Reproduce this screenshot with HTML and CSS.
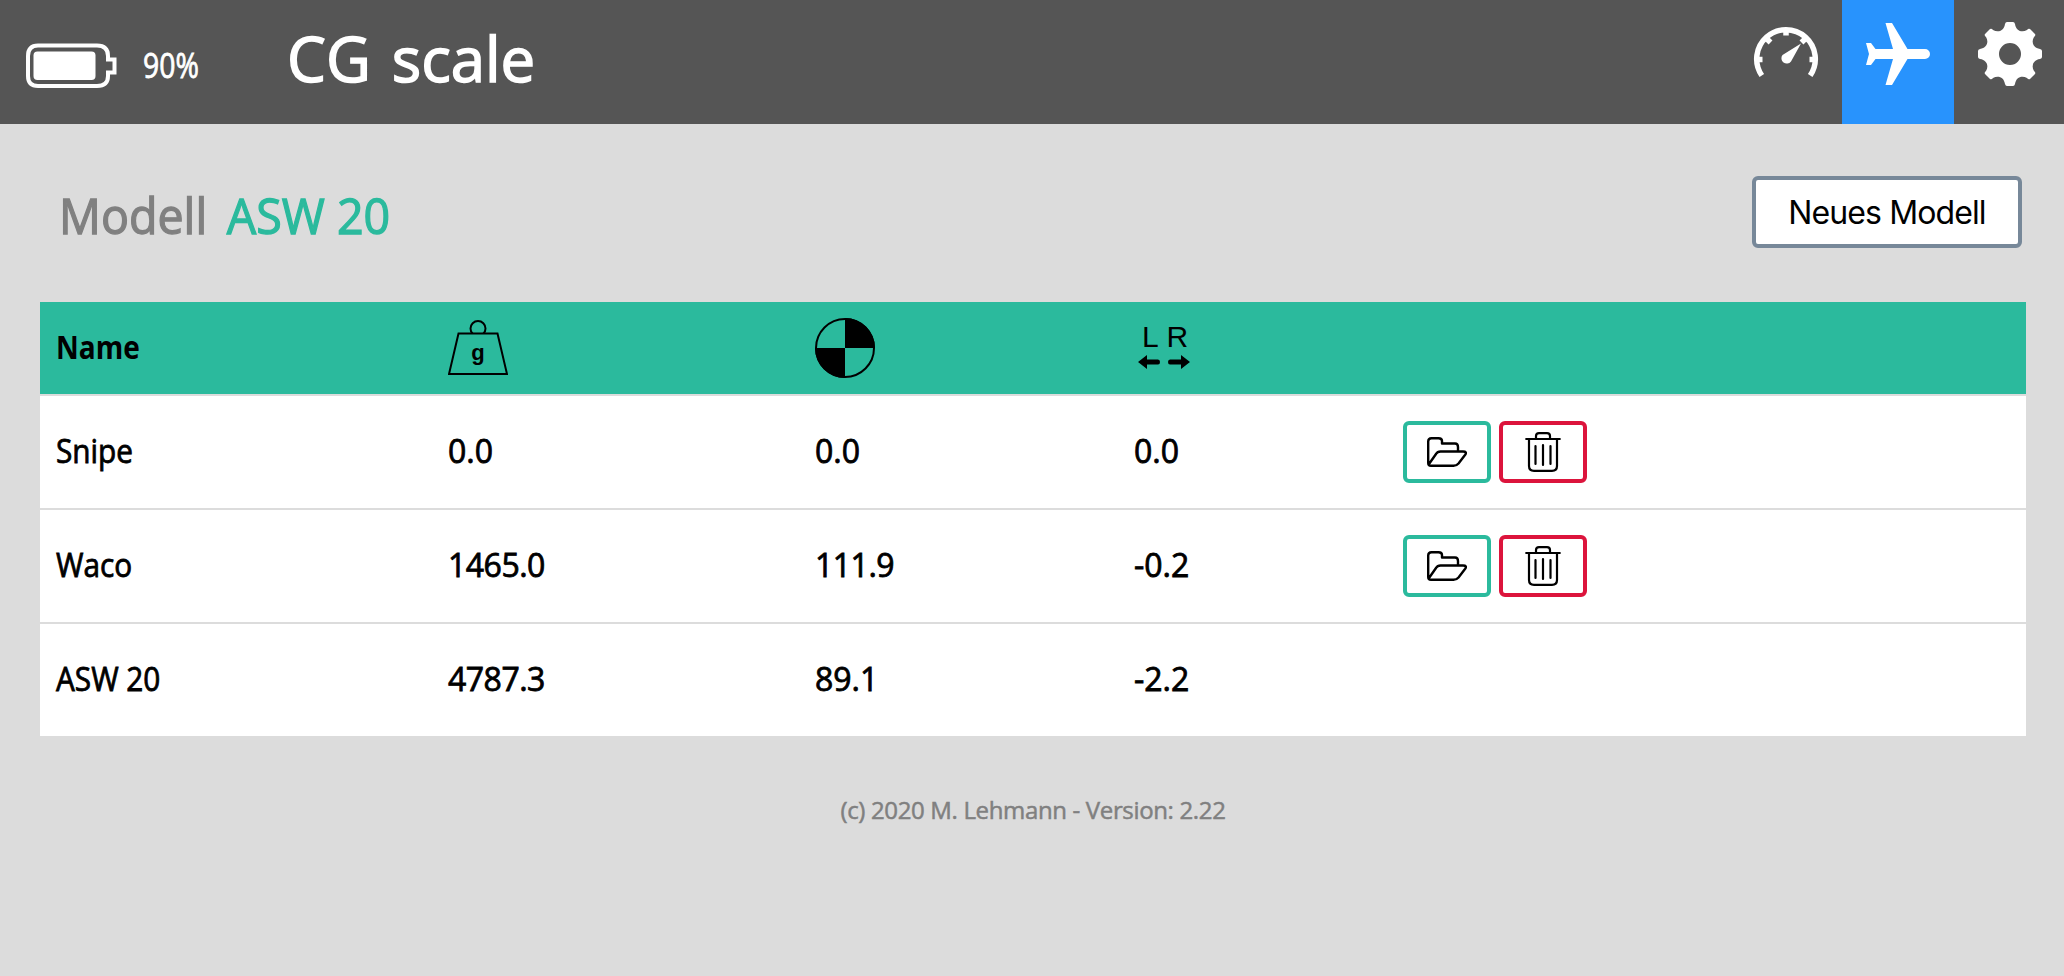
FILE: index.html
```html
<!DOCTYPE html>
<html lang="de">
<head>
<meta charset="utf-8">
<title>CG scale</title>
<link rel="stylesheet" href="styles.css">
</head>
<body>
<svg class="defs" width="0" height="0">
  <symbol id="folder" viewBox="0 0 40 30" fill="none" stroke="#000" stroke-width="2.400" stroke-linejoin="round">
    <path d="M1.200 26V4.500Q1.200 1.200 4.500 1.200H11.500Q15 1.200 15 4V6.500H28Q31 6.500 31 10V14.500M2 27L9 17Q10.500 14.500 13.500 14.500H36Q40.500 14.500 38 18L31.500 26.500Q29.500 28.800 26.500 28.800H4Q1.200 28.800 1.200 26"/>
  </symbol>
  <symbol id="trash" viewBox="0 0 36 40" fill="none" stroke="#000" stroke-width="2.200" stroke-linecap="round">
    <path d="M1.200 7H34.800M11 7V4Q11 1.200 14 1.200H22Q25 1.200 25 4V7M4 7V34Q4 38.800 9 38.800H27Q32 38.800 32 34V7M10.500 14V32M18 13V33M25.500 14V32"/>
  </symbol>
</svg>
<header class="topbar">
  <svg class="battery" viewBox="0 0 91 46" fill="none" stroke="#fff" stroke-width="4">
    <path d="M12 2.500H71Q82 2.500 82 13V16.500H88.500V29.500H82V33Q82 43 71 43H12Q2 43 2 33V13Q2 2.500 12 2.500Z"/>
    <rect x="7.500" y="8.500" width="62" height="28.500" rx="4" fill="#fff" stroke="none"/>
  </svg>
  <span class="charge">90%</span>
  <h1 class="title">CG scale</h1>
  <nav class="nav">
    <a class="tab"><svg viewBox="0 -3.500 64 64" fill="none" stroke="#fff">
      <path d="M7.800 50A29.300 29.300 0 1 1 56.200 50" stroke-width="5.500"/>
      <path d="M32 4V10M3 34H8.500M55.500 34H61M11.500 12L16.500 17M52.500 12L47.500 17" stroke-width="5.500"/>
      <path d="M47 18L37 36A5.300 5.300 0 1 1 28.500 29.500Z" fill="#fff" stroke="none"/>
    </svg></a>
    <a class="tab active"><svg viewBox="0 -1 64 64" fill="#fff">
      <path d="M19.500 0H26L41.500 26H59A5 5 0 0 1 59 36H41.500L26 62H19.500L27 36H9.500L5 42H0L3 31L0 20H5L9.500 26H27Z"/>
    </svg></a>
    <a class="tab"><svg viewBox="-32 -32 64 64" fill="#fff">
      <path fill-rule="evenodd" d="M-5-30Q-4.500-32-3-32H3Q4.500-32 5-30C6-23 12-21 17-24Q18.500-26 20-25L25-20Q26-18.500 24-17C21-12 23-6 30-5Q32-4.500 32-3V3Q32 4.500 30 5C23 6 21 12 24 17Q26 18.500 25 20L20 25Q18.500 26 17 24C12 21 6 23 5 30Q4.500 32 3 32H-3Q-4.500 32-5 30C-6 23-12 21-17 24Q-18.500 26-20 25L-25 20Q-26 18.500-24 17C-21 12-23 6-30 5Q-32 4.500-32 3V-3Q-32-4.500-30-5C-23-6-21-12-24-17Q-26-18.500-25-20L-20-25Q-18.500-26-17-24C-12-21-6-23-5-30ZM11 0A11 11 0 1 0-11 0A11 11 0 1 0 11 0Z"/>
    </svg></a>
  </nav>
</header>
<main class="content">
  <div class="heading">
    <h2 class="model"><span class="model-label">Modell</span><span class="model-name">ASW 20</span></h2>
    <button class="new-model">Neues Modell</button>
  </div>
  <div class="table">
    <div class="row head">
      <span class="name">Name</span>
      <span><svg class="head-icon" viewBox="0 0 60 60" fill="none" stroke="#000" stroke-width="2">
        <circle cx="30" cy="10.500" r="7.500"/><path d="M10.500 15.500H49.500L59 56H1Z" fill="#2bba9d"/>
        <text class="gram" x="30" y="42" text-anchor="middle">g</text>
      </svg></span>
      <span><svg class="head-icon" viewBox="0 0 60 60">
        <circle cx="30" cy="30" r="29" fill="none" stroke="#000" stroke-width="2"/>
        <path d="M30 30V0A30 30 0 0 1 60 30ZM30 30V60A30 30 0 0 1 0 30Z"/>
      </svg></span>
      <span><svg class="head-icon" viewBox="0 0 60 60">
        <text class="side" x="8" y="28.500">L</text><text class="side" x="32.500" y="28.500">R</text>
        <path d="M4 44L13 37V41.500H24Q26 41.500 26 44T24 46.500H13V51ZM56 44L47 37V41.500H36Q34 41.500 34 44T36 46.500H47V51Z"/>
      </svg></span>
      <span></span>
    </div>
    <div class="row">
      <span class="label">Snipe</span><span class="num">0.0</span><span class="num">0.0</span><span class="num">0.0</span>
      <span class="actions"><button class="open"><svg class="folder-icon"><use href="#folder"/></svg></button><button class="delete"><svg class="trash-icon"><use href="#trash"/></svg></button></span>
    </div>
    <div class="row">
      <span class="label">Waco</span><span class="num long">1465.0</span><span class="num long">111.9</span><span class="num">-0.2</span>
      <span class="actions"><button class="open"><svg class="folder-icon"><use href="#folder"/></svg></button><button class="delete"><svg class="trash-icon"><use href="#trash"/></svg></button></span>
    </div>
    <div class="row">
      <span class="label">ASW 20</span><span class="num long">4787.3</span><span class="num">89.1</span><span class="num">-2.2</span><span></span>
    </div>
  </div>
</main>
<footer class="footer">(c) 2020 M. Lehmann - Version: 2.22</footer>
</body>
</html>
```

FILE: styles.css
```css
* { box-sizing: border-box; }
body {
  margin: 0;
  min-height: 976px;
  background: #dcdcdc;
  font-family: "Open Sans", sans-serif;
  font-size: 32px;
  color: #000;
}
svg { display: block; }
.defs { position: absolute; }
.topbar {
  display: flex;
  align-items: flex-start;
  height: 124px;
  padding-left: 26px;
  background: #555;
  color: #fff;
}
.battery { width: 91px; height: 46px; margin-top: 43px; }
.charge {
  width: 120px;
  margin: 41px 0 0 26px;
  font-size: 35px;
  line-height: 48px;
  -webkit-text-stroke: 0.8px;
  transform: scaleX(0.81);
  transform-origin: left;
}
.title {
  margin: 0 0 0 24px;
  padding-top: 13px;
  font-size: 63px;
  line-height: 90px;
  font-weight: 400;
  word-spacing: 5px;
  -webkit-text-stroke: 1.5px;
  transform: scaleX(0.98);
  transform-origin: left;
}
.nav { display: flex; margin-left: auto; }
.tab { width: 112px; height: 124px; padding: 22px 24px; }
.tab:last-child { width: 110px; padding-right: 22px; }
.tab svg { width: 64px; height: 64px; overflow: visible; }
.active { background: #2893fd; }
.content { padding: 0 38px 0 40px; }
.heading {
  display: flex;
  justify-content: space-between;
  height: 178px;
  padding: 52px 4px 0 19px;
}
.model {
  display: flex;
  gap: 21px;
  margin: 0;
  font-size: 50px;
  line-height: 78px;
  font-weight: 400;
  -webkit-text-stroke: 1.3px;
  color: #808080;
  transform: scaleX(0.932);
  transform-origin: left;
}
.model-name { color: #2bba9d; }
.new-model {
  width: 270px;
  height: 72px;
  border: 4px solid #778899;
  border-radius: 6px;
  padding: 0;
  background: #fff;
  font-family: Inter, sans-serif;
  font-size: 32px;
  letter-spacing: -0.9px;
  color: #000;
}
.table { display: grid; gap: 2px; }
.row {
  display: grid;
  grid-template-columns: 392px 367px 319px 269px 1fr;
  align-items: center;
  height: 112px;
  padding-left: 16px;
  background: #fff;
}
.head { height: 92px; background: #2bba9d; }
.name, .label {
  padding-bottom: 3px;
  transform: scaleX(0.93);
  transform-origin: left;
}
.name { font-weight: 700; transform: scaleX(0.875); }
.label, .num { -webkit-text-stroke: 0.8px; }
.num { padding-bottom: 3px; letter-spacing: 0; }
.long { letter-spacing: -0.5px; }
.head-icon { width: 60px; height: 60px; }
.gram { font: 700 22px "Liberation Sans", sans-serif; fill: #000; stroke: none; }
.side { font: 30px "Liberation Sans", sans-serif; }
.actions { display: flex; gap: 8px; }
.open, .delete {
  display: flex;
  align-items: center;
  justify-content: center;
  width: 88px;
  height: 62px;
  padding: 0;
  border: 4px solid #2bba9d;
  border-radius: 6px;
  background: #fff;
}
.delete { border-color: #dc143c; }
.folder-icon { width: 40px; height: 30px; }
.trash-icon { width: 36px; height: 40px; }
.footer {
  margin-top: 57px;
  padding-left: 2px;
  font-size: 24px;
  line-height: 34px;
  text-align: center;
  letter-spacing: -0.35px;
  -webkit-text-stroke: 0.5px;
  color: #808080;
}
```
